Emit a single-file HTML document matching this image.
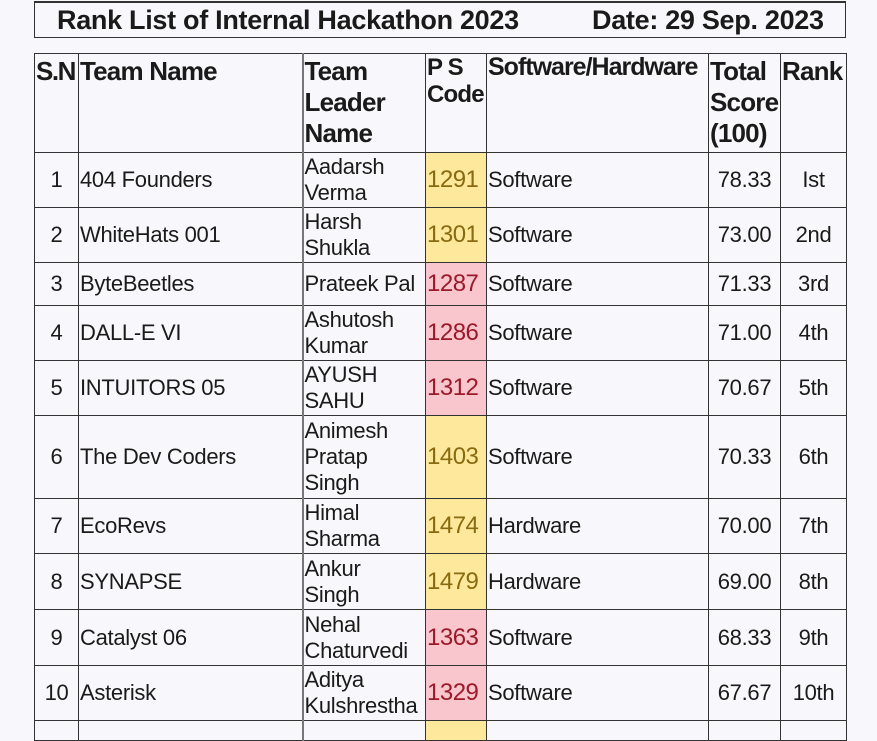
<!DOCTYPE html>
<html><head><meta charset="utf-8"><style>
html,body{margin:0;padding:0;background:#f8f8fc;width:877px;height:723px;overflow:hidden;font-family:"Liberation Sans",sans-serif;color:#1a1a1a}
.title{position:absolute;left:34px;top:1px;width:810px;height:34px;border:1px solid #333;border-top:2px solid #333}
.title span{position:absolute;top:2px;font-size:27px;font-weight:bold;letter-spacing:-0.3px}
table{position:absolute;left:34px;top:53px;border-collapse:collapse;table-layout:fixed;width:813px}
td{border:1px solid #333;padding:0 1px;font-size:22px;line-height:26px;vertical-align:middle;overflow:hidden;white-space:nowrap;letter-spacing:-0.3px}
tr.h td{font-weight:bold;vertical-align:top;font-size:26px;line-height:31px;letter-spacing:-0.8px;padding-top:2px}
td.c{text-align:center}
td.y{background:#fde89c;color:#8a6a10;font-size:24px;letter-spacing:-0.5px}
td.p{background:#f8c6cc;color:#9a1a2a;font-size:24px;letter-spacing:-0.5px}
td.l{border-left:2px solid #777}
</style></head><body>
<div class="title"><span style="left:22px">Rank List of Internal Hackathon 2023</span><span style="left:557px">Date: 29 Sep. 2023</span></div>
<table>
<colgroup><col style="width:44px"><col style="width:224px"><col style="width:123px"><col style="width:61px"><col style="width:222px"><col style="width:72px"><col style="width:66px"></colgroup>
<tr class="h" style="height:99px"><td style="letter-spacing:-1.5px">S.N</td><td>Team Name</td><td class="l">Team<br>Leader<br>Name</td><td style="font-size:24px;line-height:27px;padding-top:0">P S<br>Code</td><td style="font-size:25px;line-height:27px;padding-top:0;letter-spacing:-1px">Software/Hardware</td><td>Total<br>Score<br>(100)</td><td>Rank</td></tr>
<tr style="height:55px"><td class="c">1</td><td>404 Founders</td><td class="l">Aadarsh<br>Verma</td><td class="y">1291</td><td>Software</td><td class="c">78.33</td><td class="c">Ist</td></tr>
<tr style="height:55px"><td class="c">2</td><td>WhiteHats 001</td><td class="l">Harsh<br>Shukla</td><td class="y">1301</td><td>Software</td><td class="c">73.00</td><td class="c">2nd</td></tr>
<tr style="height:43px"><td class="c">3</td><td>ByteBeetles</td><td class="l">Prateek Pal</td><td class="p">1287</td><td>Software</td><td class="c">71.33</td><td class="c">3rd</td></tr>
<tr style="height:55px"><td class="c">4</td><td>DALL-E VI</td><td class="l">Ashutosh<br>Kumar</td><td class="p">1286</td><td>Software</td><td class="c">71.00</td><td class="c">4th</td></tr>
<tr style="height:55px"><td class="c">5</td><td>INTUITORS 05</td><td class="l">AYUSH<br>SAHU</td><td class="p">1312</td><td>Software</td><td class="c">70.67</td><td class="c">5th</td></tr>
<tr style="height:83px"><td class="c">6</td><td>The Dev Coders</td><td class="l">Animesh<br>Pratap<br>Singh</td><td class="y">1403</td><td>Software</td><td class="c">70.33</td><td class="c">6th</td></tr>
<tr style="height:55px"><td class="c">7</td><td>EcoRevs</td><td class="l">Himal<br>Sharma</td><td class="y">1474</td><td>Hardware</td><td class="c">70.00</td><td class="c">7th</td></tr>
<tr style="height:56px"><td class="c">8</td><td>SYNAPSE</td><td class="l">Ankur<br>Singh</td><td class="y">1479</td><td>Hardware</td><td class="c">69.00</td><td class="c">8th</td></tr>
<tr style="height:56px"><td class="c">9</td><td>Catalyst 06</td><td class="l">Nehal<br>Chaturvedi</td><td class="p">1363</td><td>Software</td><td class="c">68.33</td><td class="c">9th</td></tr>
<tr style="height:55px"><td class="c">10</td><td>Asterisk</td><td class="l">Aditya<br>Kulshrestha</td><td class="p">1329</td><td>Software</td><td class="c">67.67</td><td class="c">10th</td></tr>
<tr style="height:20px"><td></td><td></td><td class="l"></td><td class="y"></td><td></td><td></td><td></td></tr>
</table>
</body></html>
